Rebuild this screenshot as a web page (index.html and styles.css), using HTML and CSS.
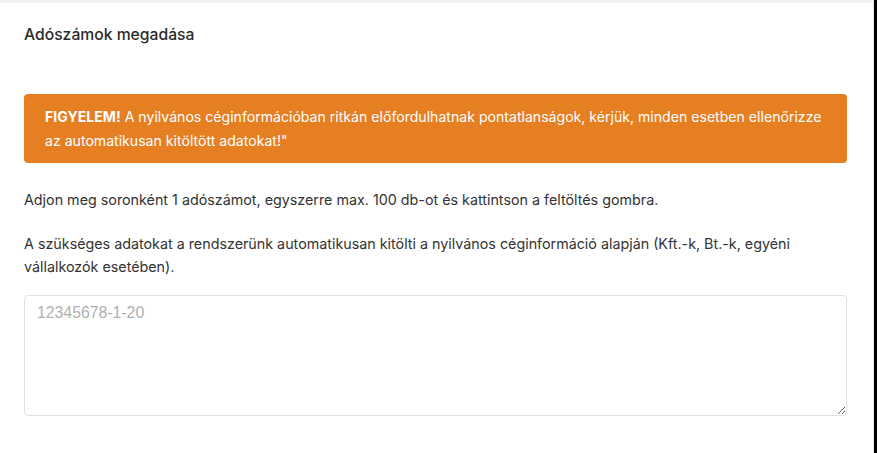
FILE: index.html
```html
<!DOCTYPE html>
<html lang="hu">
<head>
  <meta charset="UTF-8" />
  <title>Adószámok megadása</title>
  <link rel="stylesheet" href="styles.css">
</head>
<body>
  <div class="panel">
    <h3 class="panel-title">Adószámok megadása</h3>

    <div class="alert">
      <strong>FIGYELEM!</strong> A nyilvános céginformációban ritkán előfordulhatnak pontatlanságok, kérjük, minden esetben ellenőrizze az automatikusan kitöltött adatokat!"
    </div>

    <p>Adjon meg soronként 1 adószámot, egyszerre max. 100 db-ot és kattintson a feltöltés gombra.</p>
    <p class="last">A szükséges adatokat a rendszerünk automatikusan kitölti a nyilvános céginformáció alapján (Kft.-k, Bt.-k, egyéni vállalkozók esetében).</p>

    <textarea class="tax-input" placeholder="12345678-1-20"></textarea>
  </div>
</body>
</html>
```

FILE: styles.css
```css
html, body {
  margin: 0;
  height: 100%;
}

body {
  background: #000;
  font-family: Inter, "Noto Sans", sans-serif;
  color: #333;
}

.panel {
  box-sizing: border-box;
  width: 874px;
  height: 100%;
  background: #fff;
  border-top: 3px solid #f0f1f3;
  border-right: 1px solid #e4e6ea;
  padding: 21px 26px 0 24px;
}

.panel-title {
  margin: 0 0 48px;
  font-size: 15.7px;
  font-weight: 500;
  line-height: 22px;
  color: #2b2b2b;
}

.alert {
  background: #e67e22;
  color: #fff;
  border-radius: 4px;
  padding: 11px 17px 10px 21px;
  font-size: 14.1px;
  line-height: 24px;
  margin-bottom: 25px;
}

.alert strong {
  font-weight: 700;
}

p {
  margin: 0 0 21px;
  font-size: 14.3px;
  line-height: 23px;
  color: #333;
}

p.last {
  margin-bottom: 17px;
}

.tax-input {
  display: block;
  box-sizing: border-box;
  width: 100%;
  height: 121px;
  margin: 0;
  padding: 8px 12px;
  border: 1px solid #dfe1e5;
  border-radius: 4px;
  font-family: "Liberation Sans", Arial, sans-serif;
  font-size: 15.8px;
  color: #333;
}

.tax-input::placeholder {
  color: #b0b0b0;
}
```
